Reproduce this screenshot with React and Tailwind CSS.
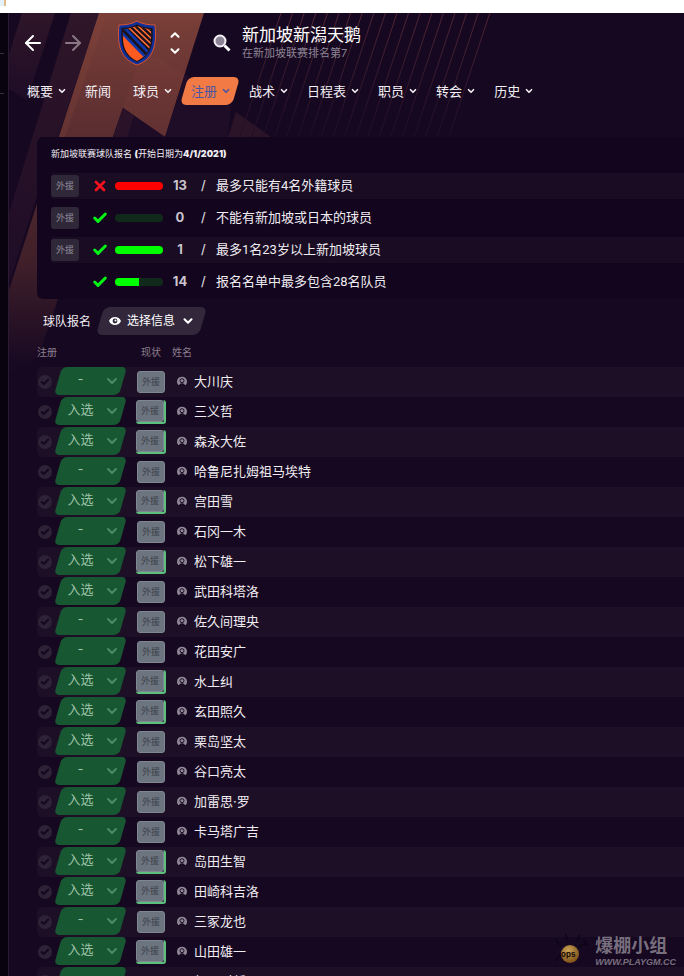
import { useState } from 'react'
import { ArrowLeft, ArrowRight, Check, ChevronDown, ChevronUp, X } from 'lucide-react'

const NAV = [
  { label: '概要', menu: true },
  { label: '新闻' },
  { label: '球员', menu: true },
  { label: '注册', menu: true, active: true },
  { label: '战术', menu: true },
  { label: '日程表', menu: true },
  { label: '职员', menu: true },
  { label: '转会', menu: true },
  { label: '历史', menu: true },
]

const RULES = [
  { tag: '外援', ok: false, fill: 100, count: 13, text: '最多只能有4名外籍球员' },
  { tag: '外援', ok: true, fill: 0, count: 0, text: '不能有新加坡或日本的球员' },
  { tag: '外援', ok: true, fill: 100, count: 1, text: '最多1名23岁以上新加坡球员' },
  { ok: true, fill: 50, count: 14, text: '报名名单中最多包含28名队员' },
]

const PLAYERS = [
  { name: '大川庆', status: '-', tag: '外援' },
  { name: '三义哲', status: '入选', tag: '外援', marked: true },
  { name: '森永大佐', status: '入选', tag: '外援', marked: true },
  { name: '哈鲁尼扎姆祖马埃特', status: '-', tag: '外援' },
  { name: '宫田雪', status: '入选', tag: '外援', marked: true },
  { name: '石冈一木', status: '-', tag: '外援' },
  { name: '松下雄一', status: '入选', tag: '外援', marked: true },
  { name: '武田科塔洛', status: '入选', tag: '外援' },
  { name: '佐久间理央', status: '-', tag: '外援' },
  { name: '花田安广', status: '-', tag: '外援' },
  { name: '水上纠', status: '入选', tag: '外援', marked: true },
  { name: '玄田照久', status: '入选', tag: '外援', marked: true },
  { name: '栗岛坚太', status: '入选', tag: '外援' },
  { name: '谷口亮太', status: '-', tag: '外援' },
  { name: '加雷思·罗', status: '入选', tag: '外援' },
  { name: '卡马塔广吉', status: '-', tag: '外援' },
  { name: '岛田生智', status: '入选', tag: '外援', marked: true },
  { name: '田崎科吉洛', status: '入选', tag: '外援', marked: true },
  { name: '三冢龙也', status: '-', tag: '外援' },
  { name: '山田雄一', status: '入选', tag: '外援', marked: true },
  { name: '红星时新', status: '-' },
]

function Backdrop() {
  const lines = Array.from({ length: 19 }, (_, i) => 272 + i * 11.6)
  return (
    <svg className="absolute inset-x-0 top-0 -z-10" width="684" height="420" aria-hidden="true">
      <defs>
        <linearGradient id="band" gradientUnits="userSpaceOnUse" x1="0" y1="0" x2="0" y2="350">
          <stop offset="0" stopColor="#7a3f38" />
          <stop offset="0.35" stopColor="#5a2d30" />
          <stop offset="0.7" stopColor="#41202a" />
          <stop offset="1" stopColor="#180922" />
        </linearGradient>
        <linearGradient id="dim" x1="0" y1="0" x2="0" y2="1">
          <stop offset="0" stopColor="#2f1629" />
          <stop offset="1" stopColor="#1e0c26" />
        </linearGradient>
        <linearGradient id="ray" gradientUnits="userSpaceOnUse" x1="0" y1="0" x2="0" y2="130">
          <stop offset="0" stopColor="#4f2632" />
          <stop offset="1" stopColor="#1c0b26" />
        </linearGradient>
      </defs>
      <path d="M13 0H46L18 87L0 76V42Z" fill="url(#dim)" />
      <path d="M62 0H90L49 124L29 180L0 270V200Z" fill="url(#dim)" />
      <path d="M90 0H195L156 124L114 95L104 124L29 345L0 360V277Z" fill="url(#band)" />
      <path d="M90 0L97 4L56 124H50Z" fill="#8c4a3d" opacity="0.2" />
      <path d="M150 45L180 64L156 124L114 95L132 40Z" fill="#8c4a3d" opacity="0.14" />
      <path d="M114 95L156 124H104Z" fill="#1e0c27" />
      <path d="M114 95L125 103L118 124H104Z" fill="#2a1229" />
      <path d="M195 0L156 124H219L222 93L176 62Z" fill="#1f0d27" />
      <path d="M227 99L262 124H219Z" fill="#2b1428" />
      <g stroke="url(#ray)" strokeWidth="1">
        {lines.map(x => <path key={x} d={`M${x} 0L${x - 41} 124`} />)}
      </g>
    </svg>
  )
}

function Crest() {
  return (
    <svg width="40" height="46" viewBox="0 0 40 46" role="img" aria-label="新加坡新潟天鹅">
      <defs>
        <clipPath id="shield">
          <path d="M20 6C25 8 30 9 34 9.500C34.500 23 34 34 20 41C6 34 5.500 23 6 9.500C10 9 15 8 20 6Z" />
        </clipPath>
      </defs>
      <path d="M20 1C25 4 32 5 38 5C40 24 37 39 20 45C3 39 0 24 2 5C8 5 15 4 20 1Z" fill="#0f2f9a" stroke="#d9542f" />
      <path d="M20 4.500C25 7 31 8 35.500 8C36.500 23 35 35.500 20 42C5 35.500 3.500 23 4.500 8C9 8 15 7 20 4.500Z" fill="#17111b" />
      <g clipPath="url(#shield)">
        <path d="M0 0H40V46H0Z" fill="#ff5a1f" />
        <path d="M6 8L36 39V0H6Z" fill="#17111b" />
        <path d="M1 5L36 41" stroke="#0f35a8" strokeWidth="8" />
        <path d="M1 5L36 41" stroke="#17111b" strokeWidth="2.500" />
        <path d="M10 6L38 33M15.500 6L38 27.500M21 6L38 22M27 6L38 16.500" stroke="#ff6a35" strokeWidth="1.600" />
      </g>
    </svg>
  )
}

function SearchIcon() {
  return (
    <svg width="18" height="18" viewBox="0 0 18 18" fill="none" aria-hidden="true">
      <circle cx="7" cy="7" r="5.500" fill="#8b8396" stroke="#f4f1f6" strokeWidth="2" />
      <path d="M11.500 11.500L16.500 16.500" stroke="#fff" strokeWidth="3" />
    </svg>
  )
}

function EyeIcon() {
  return (
    <svg width="12" height="12" viewBox="0 0 12 12" aria-hidden="true">
      <path fillRule="evenodd" fill="#fff" d="M0 6C2 .8 10 .8 12 6C10 11.200 2 11.200 0 6ZM6 3.600A2.400 2.400 0 1 0 6 8.400A2.400 2.400 0 1 0 6 3.600Z" />
      <circle cx="6.500" cy="5.500" r="1" fill="#fff" />
    </svg>
  )
}

function PersonIcon() {
  return (
    <svg width="10" height="10" viewBox="0 0 10 10" className="shrink-0" aria-hidden="true">
      <path d="M1.300 9A5 5 0 1 1 8.700 9Z" fill="#8f8897" />
      <path d="M2 10Q2.200 7.300 5 7.300Q7.800 7.300 8 10Z" fill="#1a0c23" />
      <circle cx="5" cy="4.700" r="2" fill="#8f8897" stroke="#1a0c23" strokeWidth="1" />
    </svg>
  )
}

function Tag({ children, solid, marked }) {
  if (!solid) {
    return <span className="flex h-[22px] w-7 items-center justify-center rounded-[3px] bg-[#2f2839] text-[9px] text-[#8e8897]">{children}</span>
  }
  return (
    <span className={`flex h-6 w-[30px] items-center justify-center rounded-[3px] ${marked ? 'border-r-2 border-b-2 border-[#5cc07c]' : ''}`}>
      <span className="flex h-[22px] w-7 shrink-0 items-center justify-center rounded-[3px] border border-[#7f8791] bg-[#6c7480] text-[9px] text-[#3c4149]">
        {children}
      </span>
    </span>
  )
}

function StatusSelect({ player }) {
  const [value, setValue] = useState(player.status)
  return (
    <span className="grid h-7 w-[71px] items-center">
      <span className="col-start-1 row-start-1 mx-[3px] h-7 -skew-x-[16deg] rounded-[5px] bg-[#175832]" />
      <select
        aria-label={`${player.name} 注册`}
        value={value}
        onChange={e => setValue(e.target.value)}
        className="relative col-start-1 row-start-1 h-7 appearance-none bg-transparent pr-5 pb-0.5 text-center text-[13px] text-[#9fc2a8] [text-align-last:center] outline-none"
      >
        <option>-</option>
        <option>入选</option>
      </select>
      <ChevronDown size={16} strokeWidth={3} className="pointer-events-none relative col-start-1 row-start-1 mr-1.5 justify-self-end text-[#4f8a64]" />
    </span>
  )
}

function Header() {
  return (
    <header className="flex h-[60px] items-center pl-3">
      <button aria-label="后退" className="text-white"><ArrowLeft size={24} strokeWidth={2} /></button>
      <button aria-label="前进" className="ml-4 text-[#8a7884]"><ArrowRight size={24} strokeWidth={2} /></button>
      <div className="ml-8"><Crest /></div>
      <div className="ml-[11px] flex flex-col gap-0.5 text-white">
        <button aria-label="上一个"><ChevronUp size={14} strokeWidth={3.5} /></button>
        <button aria-label="下一个"><ChevronDown size={14} strokeWidth={3.5} /></button>
      </div>
      <button aria-label="搜索" className="ml-[31px]"><SearchIcon /></button>
      <div className="ml-[11px]">
        <h1 className="text-[17px] leading-5 text-white">新加坡新潟天鹅</h1>
        <p className="text-[11px] leading-4 text-[#8b8393]">在新加坡联赛排名第7</p>
      </div>
    </header>
  )
}

function Nav() {
  return (
    <nav className="mt-1 flex pl-2">
      {NAV.map(item => (
        <a key={item.label} href="#" className={`grid h-7 items-center ${item.active ? 'text-[#4a56a0]' : 'text-[#f3f0f5]'}`}>
          {item.active && <span className="col-start-1 row-start-1 mx-[3px] h-7 -skew-x-[16deg] rounded-md bg-[#f27a45]" />}
          <span className={`relative col-start-1 row-start-1 flex items-center gap-1 pl-2.5 text-[13px] leading-7 ${item.menu ? 'pr-2' : 'pr-3'}`}>
            {item.label}
            {item.menu && <ChevronDown size={10} strokeWidth={4} />}
          </span>
        </a>
      ))}
    </nav>
  )
}

function Rules() {
  return (
    <section className="mt-8 ml-7 h-[162px] rounded-l-md bg-[#13051e] pt-[9px] pl-3.5">
      <h2 className="h-[27px] text-[9px] leading-4 text-[#f0edf2]">
        新加坡联赛球队报名 <b className="font-black">(</b>开始日期为<b className="font-black">4/1/2021)</b>
      </h2>
      <ul className="flex flex-col gap-1.5">
        {RULES.map(r => (
          <li key={r.text} className="flex h-[26px] items-center odd:bg-[#1a0c22]">
            <span className="w-7">{r.tag && <Tag>{r.tag}</Tag>}</span>
            <span className="ml-[13px] flex w-[23px]">
              {r.ok
                ? <Check size={16} strokeWidth={4.5} className="text-[#00f517]" />
                : <X size={16} strokeWidth={4} className="text-[#f5101d]" />}
            </span>
            <span className={`h-2 w-12 overflow-hidden rounded-full ${r.ok ? 'bg-[#11291b]' : 'bg-[#2b0b18]'}`}>
              <span className={`block h-2 ${r.ok ? 'bg-[#00ff00]' : 'bg-[#ff0000]'}`} style={{ width: `${r.fill}%` }} />
            </span>
            <span className="w-[34px] text-center text-[13px] font-bold text-[#c9c4cd]">{r.count}</span>
            <span className="w-[19px] pl-1 text-[13px] text-[#e6e2e9]">/</span>
            <span className="font-['Roboto','Noto_Sans_CJK_SC',sans-serif] text-[13px] text-[#f0edf2]">{r.text}</span>
          </li>
        ))}
      </ul>
    </section>
  )
}

function Watermark() {
  return (
    <div className="absolute right-2 bottom-2 flex items-end gap-1.5">
      <svg width="36" height="36" viewBox="0 0 36 36" aria-hidden="true">
        <defs>
          <radialGradient id="ball" cx="0.4" cy="0.3" r="0.8">
            <stop offset="0" stopColor="#c9a257" />
            <stop offset="1" stopColor="#74460f" />
          </radialGradient>
        </defs>
        <path d="M8 13Q4 12 3 7M15 9Q13 6 13 2M23 9Q26 7 26 3M26 15L34 11M31 8L35 14M8 24Q4 24 3 29" stroke="#0d0415" strokeWidth="1.500" fill="none" />
        <circle cx="17" cy="22" r="9" fill="url(#ball)" />
        <text x="8" y="25" fontSize="8" fontWeight="bold" fill="#1b0e08">ops</text>
      </svg>
      <div className="text-[#776f7e]">
        <p className="text-lg leading-5 font-bold">爆棚小组</p>
        <p className="font-['Liberation_Sans'] text-[9px] leading-3 font-bold italic">WWW.PLAYGM.CC</p>
      </div>
    </div>
  )
}

export default function App() {
  return (
    <div className="flex h-screen flex-col overflow-hidden bg-[#170821] font-['Inter','Noto_Sans_CJK_SC',sans-serif]">
      <div className="flex h-[13px] shrink-0 items-start bg-white">
        <span className="h-1.5 w-1 bg-[#e3f1f8]" />
        <span className="h-1.5 w-0.5 bg-[#e2b98c]" />
      </div>
      <div className="flex min-h-0 flex-1">
        <aside className="flex w-[9px] shrink-0 flex-col gap-[39px] border-r border-[#2b1a34] bg-[#08030f] pt-10">
          <span className="h-px w-1 bg-[#382f3f]" />
          <span className="h-px w-1 bg-[#382f3f]" />
        </aside>
        <main className="relative isolate min-w-0 flex-1 overflow-hidden">
          <Backdrop />
          <Header />
          <Nav />
          <Rules />

          {/* Squad list */}
          <div className="mt-2 flex h-7 items-center pl-[34px]">
            <h2 className="w-[54px] pt-0.5 text-xs text-[#f0edf2]">球队报名</h2>
            <button className="grid h-7 w-[109px] items-center">
              <span className="col-start-1 row-start-1 mx-[3px] h-7 -skew-x-[16deg] rounded-md bg-[#33273b]" />
              <span className="relative col-start-1 row-start-1 flex items-center gap-1.5 pl-3 text-xs text-white">
                <EyeIcon />
                选择信息
                <ChevronDown size={14} strokeWidth={3.5} />
              </span>
            </button>
          </div>
          <table className="w-full table-fixed border-collapse">
            <thead>
              <tr className="h-8 text-left text-[10px] text-[#8b7f8d]">
                <th className="w-[127px] p-0 pt-0.5 pl-7 font-normal">注册</th>
                <th className="w-9 p-0 pt-0.5 pl-[5px] font-normal">现状</th>
                <th className="p-0 pt-0.5 font-normal">姓名</th>
              </tr>
            </thead>
            <tbody>
              {PLAYERS.map((p, i) => (
                <tr key={p.name} className="h-[30px]">
                  <td className="p-0 pl-7">
                    <div className={`flex h-[30px] items-start rounded-l-md ${i % 2 === 0 ? 'bg-[#1d0f26]' : ''}`}>
                      <span className="mt-2 mr-[3px] ml-px flex size-3.5 items-center justify-center rounded-full bg-[#2d2236]">
                        <Check size={10} strokeWidth={5} className="text-[#160a20]" />
                      </span>
                      <StatusSelect player={p} />
                    </div>
                  </td>
                  <td className={`p-0 ${i % 2 === 0 ? 'bg-[#1d0f26]' : ''}`}>{p.tag && <Tag solid marked={p.marked}>{p.tag}</Tag>}</td>
                  <td className={`p-0 pb-0.5 ${i % 2 === 0 ? 'bg-[#1d0f26]' : ''}`}>
                    <div className="flex items-center gap-[7px] pl-[5px] text-[13px] leading-5 text-[#f0edf2]">
                      <PersonIcon />
                      {p.name}
                    </div>
                  </td>
                </tr>
              ))}
            </tbody>
          </table>
          <Watermark />
        </main>
      </div>
    </div>
  )
}
